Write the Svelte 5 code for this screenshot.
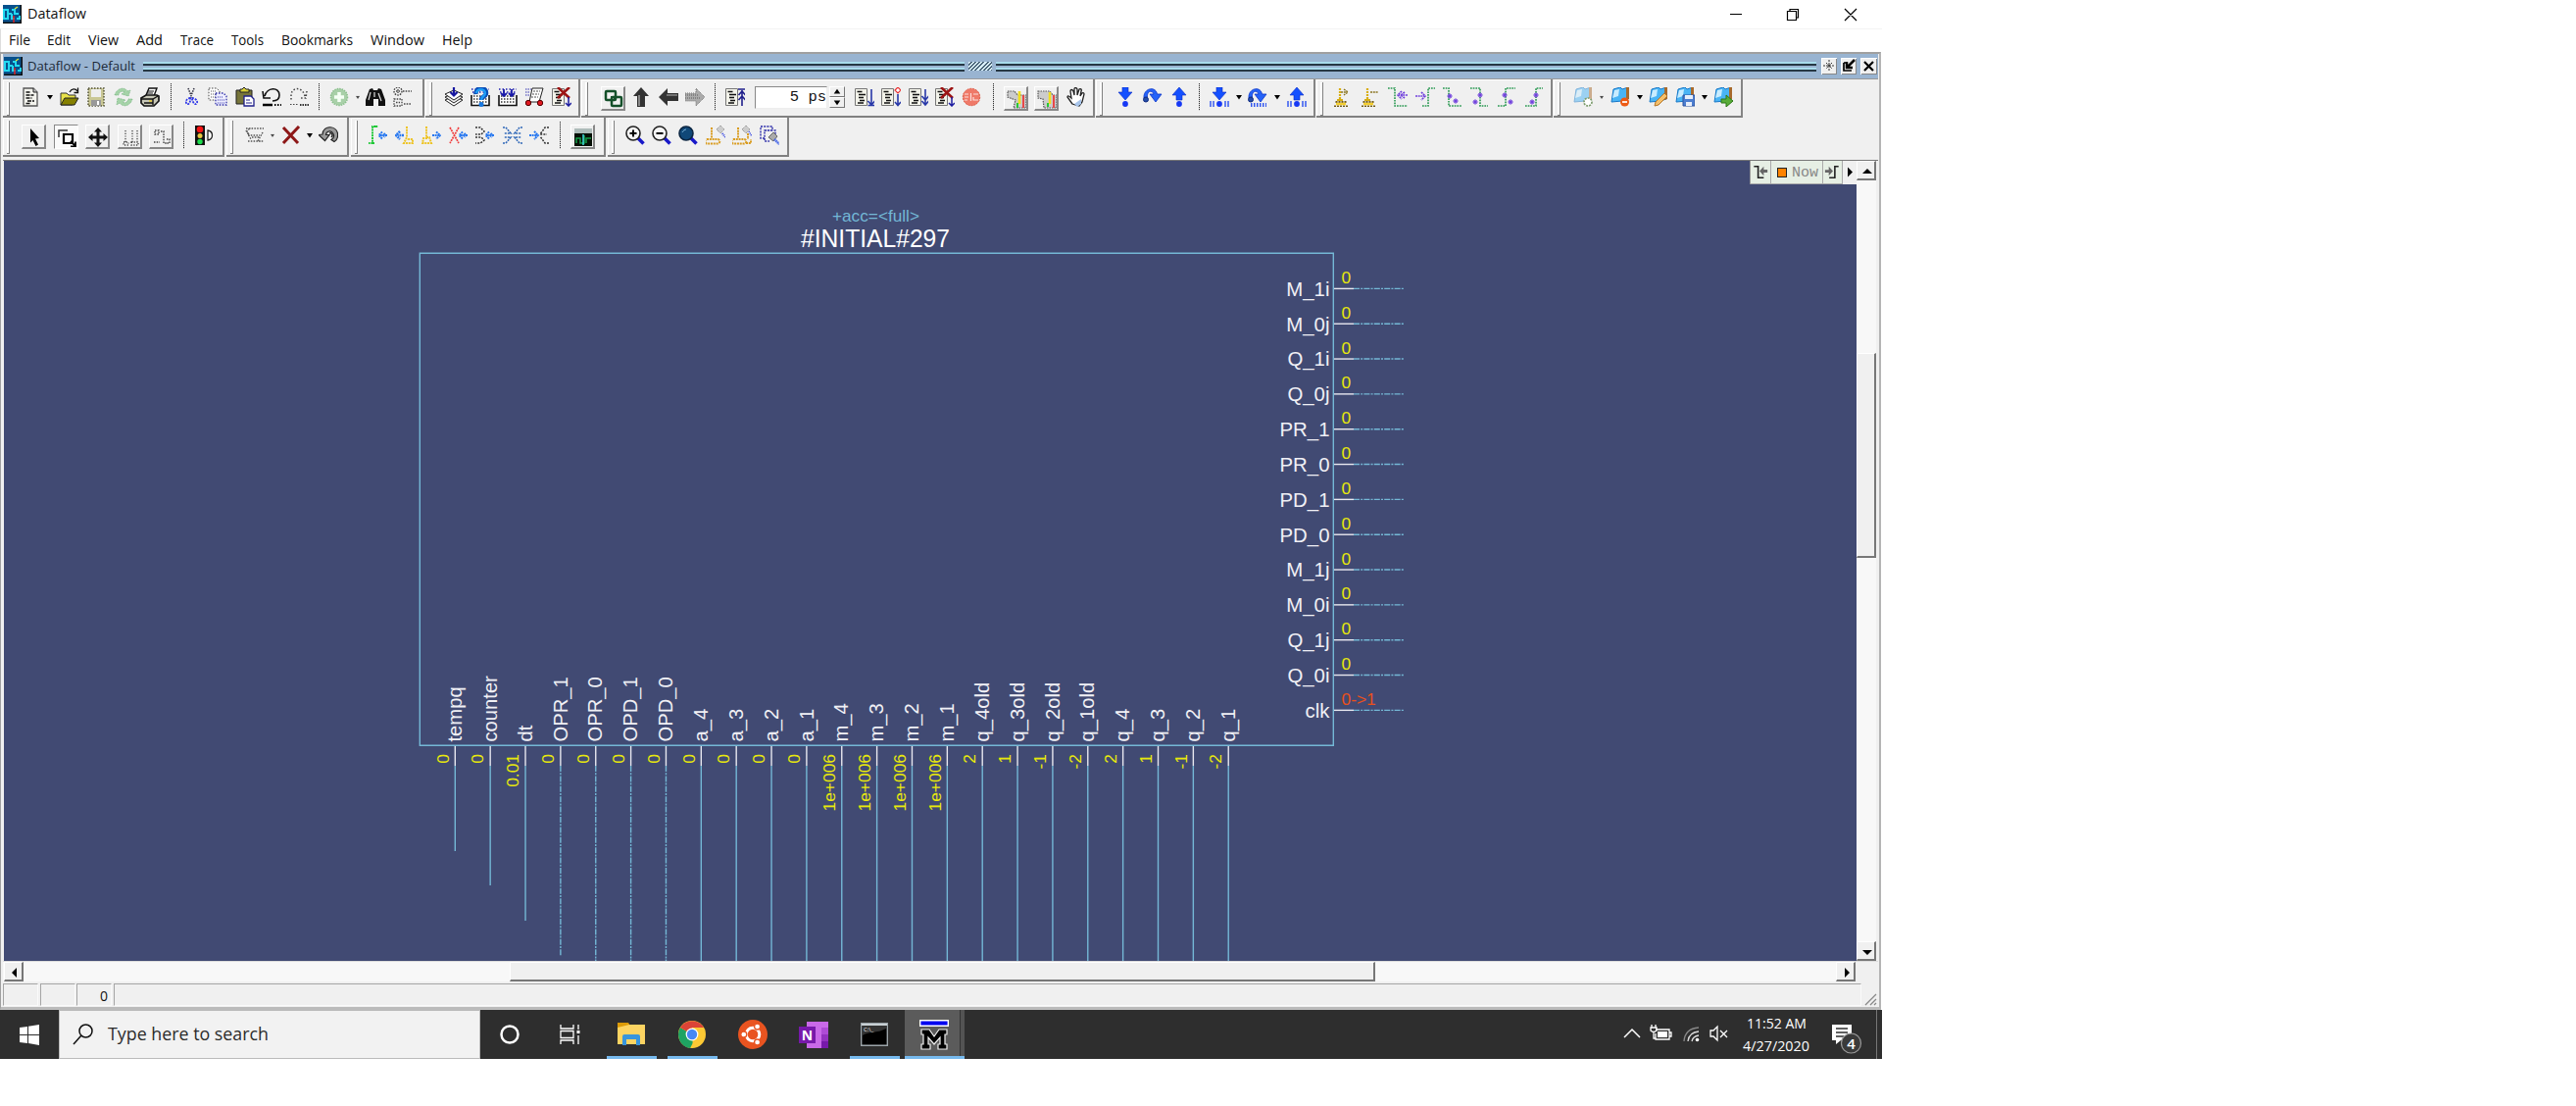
<script>
  const doc = '<path d="M3 1h10l4 4v14H3z" fill="#f4f4ee" stroke="#555" stroke-width="1.3"/><path d="M13 1v4h4" fill="#ccc" stroke="#222"/><path d="M5.500 5h4M5.500 8h8M5.500 11h6M7 14h7M5.500 16.500h4" stroke="#111" stroke-width="1.500" stroke-dasharray="4 1"/>';
  const page = '<path d="M.5 1.500h12v17H.5z" fill="#f3f3ea" stroke="#777"/><path d="M2.500 4.500h5M4 7.500h7M4 10.500h5M5 13.500h5M3 16h6" stroke="#111" stroke-width="1.600"/>';
  const tray = '<path d="M1 8v10.500h18V8" fill="#fff" stroke="#111" stroke-width="1.600"/><path d="M3 9h15M3 12h15M3 15h15" stroke="#333" stroke-width="1.500" stroke-dasharray="1.500 1.500"/><path d="M1 2h18M2 5h17" stroke="#2020b0" stroke-width="1.500" stroke-dasharray="1.500 2"/>';
  const down = '<path d="M7 0h6v5h4l-7 8-7-8h4z" fill="#1450ff" stroke="#0a2ac0" stroke-width=".6"/>';
  const up = '<path d="M7 13h6V8h4l-7-8-7 8h4z" fill="#1450ff" stroke="#0a2ac0" stroke-width=".6"/>';
  const dot = '<circle cx="10" cy="17" r="2.900" fill="#1638f5"/>';
  const arc = '<path d="M1 11C0 1 13-2 14.500 7H19l-6 8-6-8h4C10 3 4 3 4.500 10z" fill="#2563f8" stroke="#0a34c8" stroke-width=".8"/><circle cx="3" cy="12.500" r="2.500" fill="#244da8" stroke="#102a80"/>';
  const bars = '<path d="M1 14v6M4 14v6M16 14v6M19 14v6" stroke="#3458f0" stroke-width="1.500"/>';
  const blueIn = '<path d="M19 10h-7M14 6.500 10.500 10l3.500 3.500M17 8l-2 2 2 2" fill="none" stroke="#2878f0" stroke-width="2" stroke-dasharray="2 .6"/>';
  const blueOut = '<path d="M11 10h7M15 6.500l4 3.500-4 3.500" fill="none" stroke="#2878f0" stroke-width="2" stroke-dasharray="2 .6"/>';
  const cursorY = '<path d="M6 1v12" stroke="#d8ae12" stroke-width="2.200" stroke-dasharray="2 1"/><path d="M0 19.500h14M1.500 15h11" stroke="#705a18" stroke-width="2" stroke-dasharray="2 1"/><path d="M2 17h10" stroke="#f5cf30" stroke-width="2.500"/><path d="M3 13h6" stroke="#d8ae12" stroke-width="2"/>';
  const purple = '#7040dc';
  const edge = (d) => `<path d="${d}" fill="none" stroke="#289850" stroke-width="1.600" stroke-dasharray="1.700 1"/>`;
  const pmark = (x, y) => `<path d="M${x - 2.5} ${y}h5M${x} ${y - 2.5}v5" stroke="${purple}" stroke-width="1.500"/><path d="M${x - 2} ${y - 2}l4 4M${x - 2} ${y + 2}l4-4" stroke="${purple}" stroke-width=".7"/>`;
  const book = '<path d="M3 2 10 0l2 2 6-2v12l-6 2-11 1z" fill="#49b4f5" stroke="#1878c8"/><path d="m4 3 5-1-1 7-6 2z" fill="#c8ecff"/><path d="M16 0h3v12l-3 1z" fill="#a86a2c"/>';
  const lens = '<path d="m12.500 12.500 6 6" stroke="#1818c8" stroke-width="3.500"/>';
  const gold = '<path d="M6 2v11M1 14h11a2 2 0 0 1 0 4.500H1.500a2 2 0 0 1 0-4.500" fill="none" stroke="#d99c20" stroke-width="2" stroke-dasharray="2 .8"/>';

  const icons = {
    doc,
    open: '<path d="M1 6h6l2 2h7v4l-3 6H1z" fill="#e8e24a" stroke="#333"/><path d="m1 18 4-7h14l-4 7z" fill="#858000" stroke="#222"/><path d="M10 5c2-4 6-4 8-1M18.500.5v5h-4" fill="none" stroke="#111" stroke-width="1.300"/>',
    save: '<path d="M2 1h16v18H2z" fill="#c9c795" stroke="#55553a" stroke-width="1.500" stroke-dasharray="1.500 1.500"/><path d="M5 2h10v8H5z" fill="#eee"/><path d="M5 13h10v6H5z" fill="#999"/><path d="M12 14v4" stroke="#fff" stroke-width="2"/>',
    reload: '<path d="M1 8C3 1 11-1 14 4l3-1-2 6-7-2 3-2C8 3 5 5 5 8zM19 12c-2 7-9 9-13 4l-3 2 1-7 8 2-3 2c3 2 5 0 6-3z" fill="#a5d3a8" stroke="#74b47e" stroke-width=".8" stroke-dasharray="1 .7"/>',
    print: '<path d="M6 8 9 1h8l-3 8" fill="#fff" stroke="#111" stroke-width="1.400"/><path d="M8 4h6M7 6h6" stroke="#111"/><path d="m1 11 5-3h11l2 1v5l-5 5H4l-3-3z" fill="#c8c8b8" stroke="#111" stroke-width="1.700"/><path d="M1 12h12l5-3M4 16h9M13 12v6" fill="none" stroke="#111" stroke-width="1.400"/><path d="M9 14h3" stroke="#e0c830" stroke-width="1.500"/>',
    cut: '<path d="m7 1 4 10M13 1 9 11" stroke="#334" stroke-width="1.500" stroke-dasharray="1.500 1"/><path d="M9 11c-2 0-5 2-4 5 1 3 5 0 4-5zM11 11c2 0 6 2 5 5-1 3-5 0-5-5z" fill="none" stroke="#3038e8" stroke-width="1.800" stroke-dasharray="2 1"/>',
    copy: '<path d="M1 1h8l3 3v9H1z" fill="#fff" stroke="#444" stroke-dasharray="1.500 1.500"/><path d="M3 4h5M3 7h7M3 10h6" stroke="#555" stroke-dasharray="1 1"/><path d="M8 6h8l3 3v9H8z" fill="#eef" stroke="#3030a8" stroke-width="1.300" stroke-dasharray="1.500 1.500"/><path d="M10 10h5M10 13h7M10 16h7" stroke="#3030a8" stroke-dasharray="1 1"/>',
    paste: '<path d="M1 3h16v14H1z" fill="#77753a" stroke="#222"/><path d="M5 5V2h2l2-2 2 2h3v3z" fill="#d7ce38" stroke="#222"/><path d="M9 9h7l3 3v7H9z" fill="#fff" stroke="#20208a" stroke-width="1.300"/><path d="M11 13h4M11 16h6" stroke="#20208a"/>',
    undo: '<path d="M3 9C5 0 18-1 18 8c0 5-4 6-7 6M1 4l1 7h7" fill="none" stroke="#111" stroke-width="1.600"/><path d="M1 18h10" stroke="#000" stroke-width="2.500"/><path d="M13 18h7" stroke="#000" stroke-width="2" stroke-dasharray="1.500 1.500"/>',
    redo: '<path d="M16 9C14 0 4-1 2 7v6M18 4l-1 7h-6" fill="none" stroke="#444" stroke-width="1.500" stroke-dasharray="1.500 2"/><path d="M1 17.500h8" stroke="#444" stroke-dasharray="1.500 1.500"/><path d="M11 18h9" stroke="#333" stroke-width="2" stroke-dasharray="1.500 1"/>',
    add: '<circle cx="10" cy="10" r="8.500" fill="#a8d0a8" stroke="#8abf8c" stroke-width="1.500" stroke-dasharray="1.500 1"/><path d="M10 5v10M5 10h10" stroke="#f5fff5" stroke-width="3.500"/>',
    find: '<path d="m4 2 3-1 1 2h4l1-2 3 1 4 11v6h-7v-7H8v7H0v-6z" fill="#111"/><path d="m5 5-2 8M13 6l3 8M9 5v5" stroke="#ddd" stroke-width="1.200"/>',
    tree: '<circle cx="5" cy="4" r="4" fill="none" stroke="#444" stroke-width="1.400" stroke-dasharray="1.500 1.200"/><path d="M1 12h8v7H1zM10 4h9M11 17h8M3 4h4M5 2v4M3 15.500h4" fill="none" stroke="#444" stroke-width="1.300" stroke-dasharray="1.500 1.200"/>',
    stack: '<path d="m1 13 9-4 9 4-9 6z" fill="#fff" stroke="#222"/><path d="m1 10 9-4 9 4-9 6z" fill="#eee" stroke="#222"/><path d="m1 7 9-4 9 4-9 6z" fill="#fff" stroke="#222"/><path d="M10 0v8M6.500 5 10 8.500 13.500 5" fill="none" stroke="#1818a0" stroke-width="2.200"/>',
    help: tray + '<path d="M5.500 7C5-1 16-1 16 6c0 4-5 3-5 7" fill="none" stroke="#0a4fb8" stroke-width="4.500"/><path d="M6 6C6 1 15 1 15 6c0 3-4 3-4 7" fill="none" stroke="#1e9cf5" stroke-width="2.500"/><circle cx="11" cy="17.500" r="2.500" fill="#1878e0"/>',
    rain: tray + '<path d="M6 2v6M3 6l3 3 3-3M14 2v6M11 6l3 3 3-3" fill="none" stroke="#1818a8" stroke-width="1.800"/>',
    cart: '<path d="M8 1h11l-4 14H5z" fill="#fff" stroke="#222"/><path d="m9 4 7 0M8 7h7M7 10h7" stroke="#555" stroke-dasharray="2 1"/><path d="M1 2h6M1 5h5M1 8h4" stroke="#3030b0" stroke-dasharray="1.500 1"/><circle cx="4" cy="16" r="2.700" fill="#e01820" stroke="#500"/><circle cx="16" cy="16" r="2.700" fill="#e01820" stroke="#500"/>',
    xdoc: page + '<path d="m6 0 12 11M18 0 6 11" stroke="#9c1414" stroke-width="2.600"/><path d="M17 10v9M14 16l3 3 3-3" fill="none" stroke="#1c1ca0" stroke-width="1.500"/>',
    link: '<rect x="2" y="2" width="10" height="9" rx="1" fill="none" stroke="#14502a" stroke-width="2.500"/><rect x="8" y="8" width="10" height="9" rx="1" fill="none" stroke="#14502a" stroke-width="2.500"/><path d="M7 8h4v4" fill="none" stroke="#14502a" stroke-width="2"/>',
    up3: '<path d="M6 20V9H2l8-9 8 9h-4v11z" fill="#333"/><path d="M8 19V8" stroke="#888" stroke-width="2"/>',
    left3: '<path d="M20 6H9V1L0 10l9 9v-5h11z" fill="#333"/><path d="M8 8h11" stroke="#888" stroke-width="1.500"/>',
    right3: '<path d="M0 6h11V1l9 9-9 9v-5H0z" fill="#aaa" stroke="#777" stroke-dasharray="1 1"/><path d="M0 8h14M0 11h15" stroke="#777" stroke-width="1.500" stroke-dasharray="1 1"/>',
    steptop: page + '<path d="M17 3v16M13 2h8M13.500 8 17 4l3.500 4M13.500 13 17 9l3.500 4" fill="none" stroke="#20208c" stroke-width="1.600"/>',
    stepdn: page + '<path d="M17 2v16M13.500 14l3.500 4 3.500-4M13.500 18.500h7" fill="none" stroke="#2838a8" stroke-width="1.600"/>',
    steppt: page + '<path d="m17 0 3 3-3 3-3-3z" fill="#fff" stroke="#e83030" stroke-width="1.200"/><path d="M17 7v11M14 15l3 3.500 3-3.500" fill="none" stroke="#2838a8" stroke-width="1.600"/>',
    stepall: page + '<path d="M17 2v16M13.500 9l3.500 4 3.500-4M13.500 14l3.500 4 3.500-4" fill="none" stroke="#2838a8" stroke-width="1.600"/>',
    stop: '<circle cx="10" cy="10" r="8.700" fill="#ef7968" stroke="#dc5c48" stroke-dasharray="2 1"/><path d="M3 7h4M3 10h4M6 13H3M9.500 6v8M12 7h5M12 10v3h5" stroke="#fbe0dc" stroke-width="1.200" fill="none"/>',
    flagp: '<path d="M1 2h7l3 4h9v13H7l2-8-8-3z" fill="#ccc" stroke="#555" stroke-width="1.200" stroke-dasharray="1.500 1"/><path d="M13 2v13" stroke="#f0df20" stroke-width="2.700"/><path d="M17 6v13" stroke="#e84848" stroke-width="2"/><path d="M11 14v5" stroke="#28c838" stroke-width="2"/>',
    flagm: '<path d="M1 2h12l3 4h4v13H7l-1-9-5-1z" fill="#ccc" stroke="#555" stroke-width="1.200" stroke-dasharray="1.500 1"/><path d="M13 3v12" stroke="#f0df20" stroke-width="2.500"/><path d="M17 6v13" stroke="#e84848" stroke-width="2"/><path d="M11 14v4" stroke="#28c838" stroke-width="2"/>',
    hand: '<path d="m6 17-5-7c0-2 2-1 4 1L4 4c0-2 2-2 3 0l1 4V2c0-2 2-2 3 0v6l2-6c1-1 3 0 2 2l-1 5 2-3c1-1 2 0 2 1l-2 8-3 4z" fill="#fff" stroke="#222" stroke-width="1.300"/><path d="m8 17 7-5v5l-4 3z" fill="#a7c4ea"/>',
    down: down + dot, over: arc, up: up + dot,
    downb: down + dot + bars, overb: arc + '<path d="M3 18h16" stroke="#3458f0" stroke-width="4" stroke-dasharray="1.500 1.500"/>', upb: up + dot + bars,
    curadd: cursorY + '<path d="M7 5h6M10 2l4 3-4 3" fill="none" stroke="#8a7420" stroke-width="1.400" stroke-dasharray="2 .8"/>',
    curdel: cursorY + '<path d="M9 5h8" stroke="#8a7420" stroke-width="1.500" stroke-dasharray="2 .8"/>',
    e1: edge('M0 1h7v18h13') + `<path d="M20 8h-9M14 4l-4 4 4 4M17 5l-4 3 4 3" fill="none" stroke="${purple}" stroke-width="1.700" stroke-dasharray="2 .7"/>`,
    e2: edge('M7 19h6V1h7') + `<path d="M0 9h9M6 5l4 4-4 4" fill="none" stroke="${purple}" stroke-width="1.700" stroke-dasharray="2 .7"/>`,
    e3: edge('M0 1h6v18h13') + pmark(7, 9) + pmark(13, 14),
    e4: edge('M1 1h10v18h8') + pmark(11, 8) + pmark(6, 15),
    e5: edge('M1 19h8V1h10') + pmark(8, 8) + pmark(14, 15),
    e6: edge('M1 19h11V1h7') + pmark(12, 8) + pmark(8, 15),
    bkadd: '<g opacity=".5">' + book + '</g><circle cx="15" cy="15" r="4" fill="#fff" stroke="#7b9b6c" stroke-width="1.700" stroke-dasharray="2 1"/>',
    bkdel: book + '<circle cx="14.500" cy="15" r="4.500" fill="#ed5a14"/><path d="M12 15h5" stroke="#fff" stroke-width="1.700"/>',
    bkedit: book + '<path d="m6 19 1-4 9-9 3 3-9 9z" fill="#f4c06c" stroke="#b57524"/>',
    bksave: book + '<path d="M8 8h12v11H8z" fill="#4c7ed0" stroke="#2a52a0"/><path d="M10 8h8v4h-8zM11 15h6v4h-6z" fill="#e7eefa"/>',
    bkgo: book + '<path d="M8 12h5V8l7 6-7 6v-4H8z" fill="#58ac38" stroke="#2c7818"/>',
    pointer: '<path d="m6 1 9 10-4 .5 3 6-2.500 1.500-3-6L6 15.500z" fill="#000"/>',
    select: '<path d="M2 10V3h9" fill="none" stroke="#333" stroke-width="1.500"/><path d="M7 7h9v9H7z" fill="none" stroke="#000" stroke-width="2.200"/><path d="m14 14 5 5M19 14.500V19.500h-5" fill="none" stroke="#000" stroke-width="1.800"/>',
    move: '<path d="m10 0 4 4.500h-2.500v4h4V6l4.500 4-4.500 4v-2.500h-4v4H14L10 20l-4-4.500h2.500v-4h-4V14L0 10l4.500-4v2.500h4v-4H6z" fill="#111"/>',
    m1: '<path d="M5 3v12M12 3v12M17 3v12M3 15h5v3H3zM11 15h7v3h-7z" fill="none" stroke="#444" stroke-width="1.300" stroke-dasharray="1.200 1.500"/>',
    m2: '<path d="M3 3h4v4H3zM9 4h3v12h3M15 12h3v4h-3M2 15h6" fill="none" stroke="#444" stroke-width="1.400" stroke-dasharray="1.500 1.200"/>',
    light: '<path d="M1 0h10v20H1z" fill="#111"/><circle cx="6" cy="4" r="3.300" fill="#f51414"/><circle cx="6" cy="10.500" r="2.500" fill="#e8c840"/><circle cx="6" cy="16.500" r="2.700" fill="#1cdc4c"/><path d="M14 5v10c6-1 6-9 0-10z" fill="#fff" stroke="#222" stroke-width="1.300"/>',
    gate: '<path d="M1 3h18M4 9c-3-3-2-5 2-6M3 10h12M3 16h15M1 5l5 9M18 7l-5 9h6M7 12h8" fill="none" stroke="#555" stroke-width="1.400" stroke-dasharray="1.500 1.300"/>',
    cross: '<path d="m2 2 15 16M18 1 2 18" stroke="#8d1717" stroke-width="3"/>',
    again: '<path d="M4 9C5-1 18 0 19.500 8c.5 4-1 7-3.500 8.500l-3-2c2.500-1.500 3-4 2-6-2-4-7-3-7.500 1H11l-4.500 6L0 9.500z" fill="#9a9a9a" stroke="#222" stroke-width="1.200"/><path d="M11 8c3-1 4 2 2 4" fill="none" stroke="#222" stroke-width="1.500"/>',
    w1: '<path d="M7 1H4v17H0M7 1h3M4 18h2" fill="none" stroke="#20c838" stroke-width="2" stroke-dasharray="2 .8"/>' + blueIn,
    w2: '<path d="M9 10H3M5 6 1 10l4 4" fill="none" stroke="#2878f0" stroke-width="2.500" stroke-dasharray="2 .6"/><path d="M12 1v11l-3 6h9v-4h-6" fill="none" stroke="#edc428" stroke-width="2" stroke-dasharray="2 .8"/>',
    w3: '<path d="M5 1v12H2l-1 5h9l-2-6H5" fill="none" stroke="#edc428" stroke-width="2" stroke-dasharray="2 .8"/>' + blueOut,
    w4: '<path d="m1 2 9 16M10 2 1 18" stroke="#f03c3c" stroke-width="1.700" stroke-dasharray="2 .8"/>' + blueIn,
    w5: '<path d="M0 2h5l4 4-3 3H0M0 12h6l3 3-4 3H0" fill="none" stroke="#333" stroke-width="1.500" stroke-dasharray="2 1.200"/>' + blueIn,
    w6: '<path d="M0 2h3l5 6H1M0 18h3l5-6H1M20 2h-3l-5 6h7M20 18h-3l-5-6h7" fill="none" stroke="#3068b8" stroke-width="1.600" stroke-dasharray="2 1"/>',
    w7: '<path d="M0 10h8M5 6l4 4-4 4" fill="none" stroke="#2878f0" stroke-width="2" stroke-dasharray="2 .6"/><path d="M20 2h-4l-5 7h7M20 18h-4l-5-7" fill="none" stroke="#333" stroke-width="1.500" stroke-dasharray="2 1.200"/>',
    wave: '<path d="M1 1h18v18H1z" fill="#061006"/><path d="M1 1h18v5H1z" fill="#aebcba"/><path d="M3 16V11h4v5h4V8M13 16v-5h5" fill="none" stroke="#149c48" stroke-width="1.500"/><path d="M10 7v11" stroke="#40d8e0" stroke-width="1.500"/>',
    zin: lens + '<circle cx="8" cy="8" r="7" fill="#f6f6f6" stroke="#222" stroke-width="1.600"/><path d="M8 4.500v7M4.500 8h7" stroke="#000" stroke-width="2"/>',
    zout: lens + '<circle cx="8" cy="8" r="7" fill="#f6f6f6" stroke="#222" stroke-width="1.600"/><path d="M4.500 8h7" stroke="#000" stroke-width="2"/>',
    zfull: lens + '<circle cx="8" cy="8" r="7" fill="#104878" stroke="#0a2440" stroke-width="1.600"/><path d="M4 7c1-2 3-3 4-3" stroke="#78b0d8" fill="none"/>',
    z1: gold + '<path d="m11 4 4-4 4 4-4 4z" fill="#ccc" stroke="#888" stroke-dasharray="1 1"/><path d="m17 8 3 4" stroke="#3040e0" stroke-width="2" stroke-dasharray="1 1"/>',
    z2: gold + '<path d="M16 8v6M14 18h5v-4" fill="none" stroke="#d99c20" stroke-width="2" stroke-dasharray="2 .8"/><path d="m10 4 4-4 4 4-4 4z" fill="#ccc" stroke="#888" stroke-dasharray="1 1"/><path d="m17 6 3 5" stroke="#3040e0" stroke-width="1.600" stroke-dasharray="1 1"/>',
    z3: '<path d="M1 1h12v4h-8v8H1zM5 5h11v5M5 13v3h5" fill="none" stroke="#2828a8" stroke-width="1.400" stroke-dasharray="2 1.200"/><path d="m9 12 5-5 4 4-4 5z" fill="#aaa" stroke="#666"/><path d="m15 14 5 5" stroke="#4868e8" stroke-width="2.500" stroke-dasharray="1.500 .6"/>',
  };

  // Cell kinds: [icon, width, style]; style 'b' = raised button, 'p' = pressed button.
  const I = (...names) => names.map((n) => [n, 27.4, '']);
  const T = (w, off = false) => [['tri', w, off ? 'off' : '']];
  const S = (w) => [['sep', w, '']];
  const row1 = [
    { w: 430, pad: 14.3, cells: [...I('doc'), ...T(12.6), ...I('open', 'save', 'reload', 'print'), ...S(14.5), ...I('cut', 'copy', 'paste', 'undo', 'redo'), ...S(14), ...I('add'), ...T(10, true), ...I('find', 'tree')] },
    { w: 158, pad: 15.3, cells: I('stack', 'help', 'rain', 'cart', 'xdoc') },
    { w: 524, pad: 16.5, cells: [['link', 31, 'b'], ...I('up3', 'left3', 'right3'), ...S(14), ...I('steptop'), ['time', 104, ''], ...I('stepdn', 'steppt', 'stepall', 'xdoc', 'stop'), ...S(16), ['flagp', 30, 'b'], ['flagm', 33, 'b'], ...I('hand')] },
    { w: 224, pad: 16.5, cells: [...I('down', 'over', 'up'), ...S(14), ...I('downb'), ...T(11.5), ...I('overb'), ...T(12), ...I('upb')] },
    { w: 241, pad: 14, cells: ['curadd', 'curdel', 'e1', 'e2', 'e3', 'e4', 'e5', 'e6'].map((n) => [n, 27.7, '']) },
    { w: 193, pad: 16, cells: [...I('bkadd'), ...T(11, true), ...I('bkdel'), ...T(11.5), ...I('bkedit', 'bksave'), ...T(11), ...I('bkgo')] },
  ];
  const row2 = [
    { w: 226, pad: 15.3, cells: [['pointer', 32.5, 'b'], ['select', 32.5, 'p'], ['move', 32.5, 'b'], ['m1', 32.5, 'b'], ['m2', 32.5, 'b'], ...S(14), ...I('light')] },
    { w: 125, pad: 15, cells: [...I('gate'), ...T(10, true), ...I('cross'), ...T(11), ...I('again')] },
    { w: 260, pad: 14, cells: [...I('w1', 'w2', 'w3', 'w4', 'w5', 'w6', 'w7'), ...S(15), ['wave', 32, 'b']] },
    { w: 185, pad: 14, cells: I('zin', 'zout', 'zfull', 'z1', 'z2', 'z3') },
  ];

  const menu = [['File', 22], ['Edit', 24], ['View', 31], ['Add', 27], ['Trace', 34], ['Tools', 33], ['Bookmarks', 73], ['Window', 55], ['Help', 31]];
  const outs = ['M_1i', 'M_0j', 'Q_1i', 'Q_0j', 'PR_1', 'PR_0', 'PD_1', 'PD_0', 'M_1j', 'M_0i', 'Q_1j', 'Q_0i', 'clk'];
  const pins = [
    ['tempq', '0', 704], ['counter', '0', 739], ['dt', '0.01', 775], ['OPR_1', '0', 811, 1], ['OPR_0', '0', 816, 1], ['OPD_1', '0', 816, 1], ['OPD_0', '0', 816, 1],
    ['a_4', '0'], ['a_3', '0'], ['a_2', '0'], ['a_1', '0'], ['m_4', '1e+006'], ['m_3', '1e+006'], ['m_2', '1e+006'], ['m_1', '1e+006'],
    ['q_4old', '2'], ['q_3old', '1'], ['q_2old', '-1'], ['q_1old', '-2'], ['q_4', '2'], ['q_3', '1'], ['q_2', '-1'], ['q_1', '-2'],
  ];
</script>

{#snippet label(text, w, size, h, base)}
  <svg class="label" width={w} height={h}><text x="0" y={base} font-size={size} textLength={w} lengthAdjust="spacingAndGlyphs">{text}</text></svg>
{/snippet}

{#snippet appIcon()}
  <svg width="19" height="19" viewBox="0 0 19 19"><path d="M0 0h19v19H0z" fill="#111"/><path d="M0 0h17.500v17.500H0z" fill="#07518c"/><path d="M1 5h4v9H1zM5 9h4M9 5h3v4h4M9 9v5h3M14 14h3v-3" fill="none" stroke="#22d8f0" stroke-width="2"/><path d="M11 11v7" stroke="#e02020" stroke-width="1.500"/><path d="m12 4 3-2" stroke="#d8e040" stroke-width="1.500"/></svg>
{/snippet}

{#snippet arrow(d)}
  <svg width="20" height="20" viewBox="0 0 20 20"><path {d} fill="#000"/></svg>
{/snippet}

{#snippet toolbar(groups)}
  {#each groups as g}
    <div class="group" style:width="{g.w}px" style:padding-left="{g.pad}px">
      {#each g.cells as [name, w, kind]}
        <div class="cell" style:width="{w}px">
          {#if name === 'sep'}
            <i class="sep"></i>
          {:else if name === 'tri'}
            <svg class={kind} width="8" height="5" viewBox="0 0 8 5"><path d="M1 0h6L4 4.500z"/></svg>
          {:else if name === 'time'}
            <div class="time"><span>5 ps</span></div>
            <div class="spin">
              <svg width="16" height="11" viewBox="0 0 16 11"><path d="M8 2l4 6H4z"/></svg>
              <svg width="16" height="11" viewBox="0 0 16 11"><path d="M8 9l4-6H4z"/></svg>
            </div>
          {:else}
            <div class="tool {kind}"><svg width="20" height="20" viewBox="0 0 20 20" fill="none">{@html icons[name]}</svg></div>
          {/if}
        </div>
      {/each}
    </div>
  {/each}
{/snippet}

<div class="desktop">
  <header class="title">
    {@render appIcon()}
    {@render label('Dataflow', 60, 14.5, 22, 16)}
    <svg class="winbtns" width="160" height="28" viewBox="0 0 160 28"><path d="M15 13.500h12M73.500 10.500h9v9h-9zM76 10V8.500h8.500V17H83M132 8l12 12M144 8l-12 12" fill="none" stroke="#000" stroke-width="1.200"/></svg>
  </header>
  <nav>
    {#each menu as [m, w]}{@render label(m, w, 14, 24, 17)}{/each}
  </nav>
  <main>
    <div class="dock">
      {@render appIcon()}
      {@render label('Dataflow - Default', 110, 13.5, 22, 15)}
      <div class="grip"><i></i><b></b><i></i></div>
      <div class="dockbtns">
        <svg width="16" height="17" viewBox="0 0 16 17"><path d="M8 2v12M2 8h12M5 5l6 6M11 5l-6 6" stroke="#333" stroke-dasharray="2 1"/></svg>
        <svg width="16" height="17" viewBox="0 0 16 17"><path d="M3 5v8h8M3 5h3" fill="none" stroke="#000" stroke-width="1.700"/><path d="m14 2-7 7M6 4v6h6" fill="none" stroke="#000" stroke-width="2.500"/></svg>
        <svg width="17" height="17" viewBox="0 0 17 17"><path d="m4 4 9 9M13 4l-9 9" stroke="#000" stroke-width="2.200"/></svg>
      </div>
    </div>
    <div class="tools">{@render toolbar(row1)}</div>
    <div class="tools second">{@render toolbar(row2)}</div>

    <div class="work">
      <div class="canvas">
        <svg width="1890" height="816" viewBox="4 164 1890 816">
          <path d="M428.300 258.300h932v502h-932z" class="wire" />
          <text x="849" y="226" class="acc" textLength="89" lengthAdjust="spacingAndGlyphs">+acc=&lt;full&gt;</text>
          <text x="817" y="251.500" class="name" textLength="152" lengthAdjust="spacingAndGlyphs">#INITIAL#297</text>
          {#each outs as o, i}
            {@const y = 294.4 + i * 35.83}
            <text class="pin" x="1356.500" y={y + 7.3} text-anchor="end">{o}</text>
            <path class="stub" d="M1361 {y}h20" />
            <path class="wire dash" d="M1381 {y}h52" />
            <text class="val" class:hot={o === 'clk'} x="1368.500" y={y - 5.5}>{o === 'clk' ? '0->1' : '0'}</text>
          {/each}
          {#each pins as [p, v, end, dash], i}
            {@const x = 464.3 + i * 35.86}
            <text class="pin side" transform="translate({x + 6.7} 756.500) rotate(-90)">{p}</text>
            <text class="val" text-anchor="end" transform="translate({x - 6.8} 769) rotate(-90)">{v}</text>
            <path class="wire" class:dash d="M{x} 781V{164 + (end ?? 816)}" />
            <path class="stub" d="M{x} 761v20" />
          {/each}
        </svg>
        <div class="now">
          <svg width="21" height="22" viewBox="0 0 21 22"><path d="M3.500 5H8v12h6" fill="none" stroke="#222" stroke-width="1.700"/><path d="M18 8.500v3h-4V15L9.500 10 14 5v3.500z" fill="#666"/></svg>
          <div><i></i><span>Now</span></div>
          <svg width="20" height="22" viewBox="0 0 20 22"><path d="M16.500 5h-4v12h-6" fill="none" stroke="#222" stroke-width="1.700"/><path d="M2 8.500v3h4V15l4.500-5L6 5v3.500z" fill="#666"/></svg>
          <svg class="more" width="14" height="23" viewBox="0 0 14 23"><path d="m5 6 5 5-5 5z"/></svg>
        </div>
      </div>
      <div class="vbar">
        <div class="btn">{@render arrow('M5 12h10l-5-5z')}</div>
        <div class="thumb"></div>
        <div class="btn">{@render arrow('M5 8h10l-5 5z')}</div>
      </div>
    </div>
    <div class="hbar">
      <div class="btn">{@render arrow('M12 5v10l-5-5z')}</div>
      <div class="thumb"></div>
      <div class="btn">{@render arrow('M8 5v10l5-5z')}</div>
      <div class="corner"></div>
    </div>
    <div class="status">
      <span></span><span></span><span>0</span><span></span>
      <svg width="16" height="24" viewBox="0 0 16 24"><path d="m3 22 11-11M8 22l6-6M12 22l2-2" stroke="#888" stroke-width="1.300"/></svg>
    </div>
  </main>

  <footer>
    <div class="start"><svg width="20" height="21" viewBox="0 0 20 21"><path d="M0 3 8 2v8H0zM9 1.800 20 0v10H9zM0 11h8v8l-8-1zM9 11h11v10L9 19z" fill="#fff"/></svg></div>
    <div class="search">
      <svg width="22" height="22" viewBox="0 0 22 22"><circle cx="13.500" cy="7.500" r="6.500" fill="none" stroke="#111" stroke-width="1.500"/><path d="m9 12-8 9" stroke="#111" stroke-width="1.500"/></svg>
      {@render label('Type here to search', 164, 18.5, 30, 21)}
    </div>
    <div class="app"><svg width="22" height="22" viewBox="0 0 22 22"><circle cx="11" cy="11" r="8.500" fill="none" stroke="#fff" stroke-width="2.500"/></svg></div>
    <div class="app"><svg width="22" height="20" viewBox="0 0 22 20"><path d="M1 0v4h13V0M1 20v-4h13v4M1 6.500h13v7H1zM19 0v5M19 11v9" fill="none" stroke="#fff" stroke-width="1.300"/><path d="M17.500 6h3v3h-3z" fill="#fff"/></svg></div>
    <div class="app open"><svg width="28" height="24" viewBox="0 0 28 24"><path d="M0 0h11l2 3v5H0z" fill="#dc9b08"/><path d="M0 5 12 2h16v20H0z" fill="#fcd462"/><path d="M5 23V14q0-2 2-2h14q2 0 2 2v9h-4v-6H9v6z" fill="#3895dc"/></svg></div>
    <div class="app open"><svg width="28" height="28" viewBox="0 0 28 28"><circle cx="14" cy="14" r="14" fill="#fcc934"/><path d="M14 14 2 7A14 14 0 0 0 12 28l6-11z" fill="#1ea362"/><path d="M14 14 2 7a14 14 0 0 1 24.100 0H14z" fill="#db4437"/><path d="M14 14h6l-7 14h2z" fill="#fcc934"/><circle cx="14" cy="14" r="6.400" fill="#fff"/><circle cx="14" cy="14" r="5.200" fill="#4688f4"/></svg></div>
    <div class="app"><svg width="30" height="30" viewBox="0 0 30 30"><circle cx="15" cy="15" r="15" fill="#e95420"/><circle cx="15" cy="15" r="6.800" fill="none" stroke="#fff" stroke-width="3"/><g fill="#fff" stroke="#e95420" stroke-width="1.300"><circle cx="5.800" cy="15" r="3"/><circle cx="19.600" cy="7" r="3"/><circle cx="19.600" cy="23" r="3"/></g></svg></div>
    <div class="app"><svg width="30" height="27" viewBox="0 0 30 27"><path d="M8 0h22v27H8z" fill="#c969e8"/><path d="M23 6h7v7h-7z" fill="#ae4bd5"/><path d="M23 13h7v7h-7z" fill="#9332bf"/><path d="M23 20h7v7h-7z" fill="#7719aa"/><path d="M0 5h17v17H0z" fill="#7719aa"/><text x="8.500" y="18.500" text-anchor="middle" fill="#fff" font-size="14" font-weight="700">N</text></svg></div>
    <div class="app open"><svg width="28" height="24" viewBox="0 0 28 24"><path d="M.7.700h26.600v22.600H.7z" fill="#000" stroke="#9ba4a9" stroke-width="1.400"/><path d="M1 1h26v2H1z" fill="#c8d0d4"/><path d="M2 13c5-4 15-2 24-7V3H2z" fill="#333"/><text x="3" y="9" fill="#eee" font-size="6">C:\_</text></svg></div>
    <div class="app open active"><svg width="30" height="31" viewBox="0 0 30 31"><path d="M.7.700h28.600v5.600H.7z" fill="#0000f0" stroke="#fff" stroke-width="1.400"/><path d="M2 10h8l5 7 5-7h8v5h-2v10h2v5h-9v-5h2v-7l-6 7-6-7v7h2v5H2v-5h2V15H2z" fill="#000" stroke="#eee" stroke-width="1.200"/></svg></div>
    <div class="trayicons">
      <svg width="120" height="28" viewBox="0 0 120 28"><path d="m5 17 8-8 8 8" fill="none" stroke="#fff" stroke-width="1.500"/><path d="M37 9h14v10H37v-6M51 12h2v4h-2M33 4v3M37 4v3M32 7h6v3q-3 3-6 0zM35 12v6h2" fill="none" stroke="#fff" stroke-width="1.300"/><path d="M39 11h10v6H39z" fill="#fff"/><g fill="none" stroke-width="1.300"><path d="M66 21Q67 8 81 7" stroke="#888"/><path d="M70 21q1-9 11-10M74 21q1-5 7-6" stroke="#ddd"/></g><circle cx="79.500" cy="19.500" r="1.800" fill="#fff"/><path d="M93 10h3l4-4v14l-4-4h-3zM103 10l7 7M110 10l-7 7" fill="none" stroke="#fff" stroke-width="1.300"/></svg>
    </div>
    <div class="clock">
      {@render label('11:52 AM', 61, 15, 23, 14.5)}
      {@render label('4/27/2020', 68, 15, 23, 14.5)}
    </div>
    <svg class="notif" width="34" height="34" viewBox="0 0 34 34"><path d="M1 3h20v16H10l-5 4v-4H1z" fill="#fff"/><path d="M5 7h12M5 11h12M5 15h8" stroke="#2d2d2d" stroke-width="1.300"/><circle cx="20.500" cy="22" r="10" fill="#3a3a3a" stroke="#999" stroke-width="1.200"/><text x="20.500" y="27.500" text-anchor="middle" font-size="15" font-weight="600" fill="#fff">4</text></svg>
    <i class="peek"></i>
  </footer>
</div>

<style>
  :global(body) { background: #fff; }
  .desktop { width: 1920px; height: 1080px; display: flex; flex-direction: column; font-family: 'Open Sans', 'Noto Sans', sans-serif; color: #111; overflow: hidden; }
  .desktop * { box-sizing: border-box; }
  svg { display: block; flex: none; }
  .label { overflow: visible; fill: currentColor; }
  .title { height: 29px; display: flex; align-items: center; gap: 6px; padding-left: 3px; }
  .title .label { margin-top: -1px; }
  .winbtns { margin-left: auto; margin-right: 10px; }
  nav { height: 24px; display: flex; gap: 17.900px; padding-left: 7.500px; border-top: 1px solid #f3f3f3; border-left: 1px solid #ddd; }
  nav .label { margin-top: -1px; }
  main { height: 977px; border: 1px solid #a0a0a0; border-right: 2px solid #b4b4b4; border-bottom: 3px solid #bbb; border-top-width: 2px; background: #f0f0f0; width: 1919px; padding: 0 1px 0 2px; display: flex; flex-direction: column; }
  .dock { height: 25px; background: #99b4d1; display: flex; align-items: center; padding: 0 0 0 1px; gap: 5px; }
  .dock .label { margin-right: 3px; color: #202a38; }
  .grip { height: 12px; flex: 1; display: flex; align-items: center; gap: 4px; }
  .grip i { flex: 1; height: 10px; background: linear-gradient(#a8dcec 0 2px, #263844 2px 4px, #99b4d1 4px 6px, #a8dcec 6px 8px, #263844 8px 10px); }
  .grip b { width: 24px; height: 9px; background: repeating-linear-gradient(135deg, #d8eef8 0 1.500px, #4a6478 1.500px 3px); }
  .dockbtns { display: flex; gap: 4px; padding-right: 1px; }
  .dockbtns svg { background: #f0f0f0; box-shadow: inset 1px 1px #fff, inset -1px -1px #888; }
  .tools { height: 40px; display: flex; gap: 1px; border-top: 1px solid #999; }
  .second { border-top: 0; gap: 2px; }
  .group { height: 39px; display: flex; flex: none; border-right: 2px solid #858585; border-bottom: 2px solid #808080; background: linear-gradient(#808080, #808080) 6px 3px / 1px 34px no-repeat, linear-gradient(#808080, #808080) 4px 36px / 3px 1px no-repeat, linear-gradient(#fff, #fff) 4px 3px / 2px 33px no-repeat, #f0f0f0; box-shadow: inset 1px 1px #fff; }
  .second .group { height: 40px; }
  .cell { height: 36px; display: flex; align-items: center; justify-content: center; flex: none; }
  .sep { width: 1px; height: 28px; background: repeating-linear-gradient(#333 0 1px, #ccc 1px 2px); }
  .cell .off { transform: scale(.7); opacity: .7; }
  .tool { width: 20px; height: 20px; }
  .b, .p { width: 25px; height: 25px; margin-top: 3px; padding: 2px; border: 1px solid #fff; border-right: 2px solid #888; border-bottom: 2px solid #888; }
  .p { background: #fafafa; border: 1px solid #888; border-right-color: #fff; border-bottom-color: #fff; }
  .time { width: 74px; height: 23px; background: #fff; border: 1px solid #888; border-right-color: #eee; border-bottom-color: #eee; font: 15.500px 'Liberation Mono', monospace; display: flex; align-items: center; justify-content: flex-end; white-space: pre; margin-right: 2px; }
  .spin svg { border: 1px solid #fff; border-right-color: #777; border-bottom-color: #777; }
  .work { height: 817px; margin-top: 3px; border-top: 1px solid #777; display: flex; padding-left: 1px; }
  .canvas { width: 1890px; height: 816px; background: #414a73; position: relative; overflow: hidden; font-family: 'Liberation Sans', Arial, sans-serif; }
  .wire { fill: none; stroke: #74b8d6; stroke-width: 1.400; }
  .dash { stroke-dasharray: 6 1.200 2 1.200; }
  .stub { stroke: #e8e8f0; stroke-width: 1.400; }
  .acc { font-size: 17px; fill: #73b8d6; }
  .name { font-size: 25px; fill: #fff; }
  .pin { font-size: 20.400px; fill: #f0f0f5; }
  .side { font-size: 20.200px; }
  .val { font-size: 17.400px; fill: #e8e80c; }
  .hot { fill: #e8501c; }
  .now { position: absolute; top: 0; right: 0; display: flex; height: 24px; background: #e6efe4; border-left: 1px solid #999; }
  .now > * { border-right: 1px solid #aaa; border-bottom: 1px solid #aaa; height: 24px; }
  .now div { width: 53px; display: flex; align-items: center; gap: 5px; padding-left: 6px; }
  .now i { width: 10px; height: 10px; background: #ff8400; border: 1px solid #222; flex: none; }
  .now span { font: 15px 'Liberation Mono', monospace; color: #888; padding-top: 2px; }
  .now .more { background: #f0f0f0; border: 0; }
  .btn { width: 20px; height: 20px; background: #f0f0f0; border: 1px solid #fff; border-right: 2px solid #777; border-bottom: 2px solid #777; display: grid; place-items: center; flex: none; }
  .vbar { width: 20px; background: #f8f8f8; display: flex; flex-direction: column; justify-content: space-between; }
  .thumb { background: #f0f0f0; border: 1px solid #fff; border-right: 2px solid #777; border-bottom: 2px solid #777; }
  .vbar .thumb { height: 209px; margin-bottom: 215px; }
  .hbar { height: 21px; background: #f8f8f8; display: flex; padding-left: 1px; border-top: 1px solid #ddd; }
  .hbar .thumb { width: 883px; margin: 0 470px 0 496px; }
  .corner { flex: 1; background: #f0f0f0; }
  .status { height: 26px; display: flex; gap: 1.500px; align-items: flex-start; padding-top: 2px; }
  .status span { width: 36px; height: 23px; border: 1px solid #a5a5a5; border-right-color: #fafafa; border-bottom-color: #fafafa; font-size: 14px; line-height: 23px; text-align: right; padding-right: 3px; }
  .status span:nth-child(4) { flex: 1; }
  footer { height: 50px; display: flex; background: #2e2e2e; color: #fff; }
  .start { width: 60px; display: grid; place-items: center; }
  .search { width: 430px; background: #f2f2f2; border: 1px solid #bbb; color: #2b2b2b; display: flex; align-items: center; padding-left: 13px; gap: 14px; }
  .app { width: 62px; height: 50px; display: grid; place-items: center; background: linear-gradient(#76b9ed, #76b9ed) 50% 100% / 0 3px no-repeat; }
  .app:nth-child(3) { width: 60px; }
  .app:nth-child(4) { width: 63px; }
  .open { background-size: 51px 3px; }
  .active { background: linear-gradient(#76b9ed, #76b9ed) 0 100% / 61px 3px no-repeat, linear-gradient(90deg, #5b5b5b 0 56px, #333 56px 57px, #535353 57px 61px, transparent 61px); }
  .active svg { margin-right: 2px; }
  .trayicons { margin-left: auto; margin-right: -6px; padding: 11px 0 0; }
  .clock { width: 92px; display: flex; flex-direction: column; align-items: center; padding: 4px 0 0 0; }
  .notif { margin: 12px 0 0 10px; }
  .peek { width: 1px; background: #777; margin: 0 5px 0 12px; }
</style>
